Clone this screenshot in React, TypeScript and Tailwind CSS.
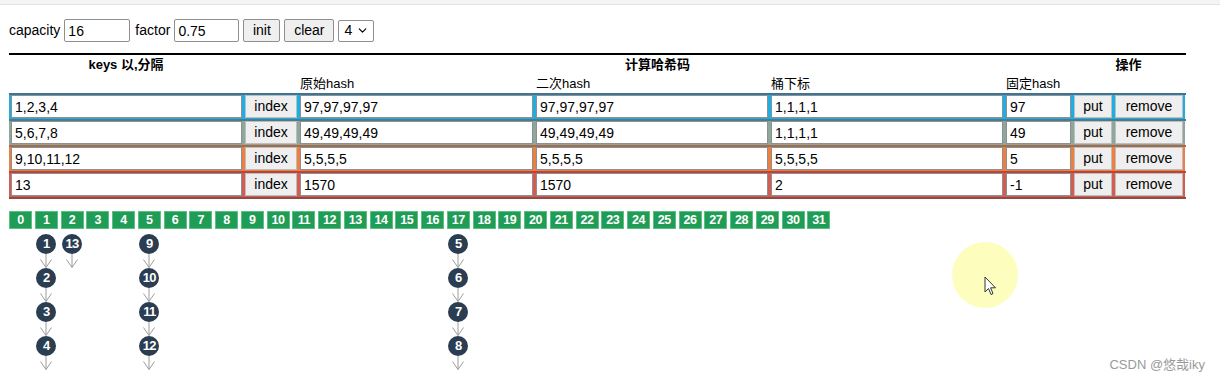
import { ChevronDown } from 'lucide-react';

type Row = {
  keys: string;
  h1: string;
  h2: string;
  idx: string;
  fixed: string;
  cell: string;
  edge: string;
};

const rows: Row[] = [
  { keys: '1,2,3,4', h1: '97,97,97,97', h2: '97,97,97,97', idx: '1,1,1,1', fixed: '97', cell: 'bg-[#1aafe6]', edge: 'border-[#3b7697]' },
  { keys: '5,6,7,8', h1: '49,49,49,49', h2: '49,49,49,49', idx: '1,1,1,1', fixed: '49', cell: 'bg-[#8ca89a]', edge: 'border-[#52798a]' },
  { keys: '9,10,11,12', h1: '5,5,5,5', h2: '5,5,5,5', idx: '5,5,5,5', fixed: '5', cell: 'bg-[#ef7f3f]', edge: 'border-[#a8694d]' },
  { keys: '13', h1: '1570', h2: '1570', idx: '2', fixed: '-1', cell: 'bg-[#d65b51]', edge: 'border-[#b4483f]' },
];

// bucket index -> chain of keys
const chains: Record<number, number[]> = {
  1: [1, 2, 3, 4],
  2: [13],
  5: [9, 10, 11, 12],
  17: [5, 6, 7, 8],
};

const font = "font-['Liberation_Sans','Noto_Sans_CJK_SC',sans-serif]";

const Arrow = () => (
  <svg width="16" height="14" viewBox="0 0 16 14" className="block">
    <line x1="8" y1="0" x2="8" y2="13.5" stroke="#9c9c9c" strokeWidth="1" />
    <polyline points="2.5,5.5 8,13.5 13.5,5.5" fill="none" stroke="#9c9c9c" strokeWidth="1" />
  </svg>
);

const Node = ({ n }: { n: number }) => (
  <div className="w-[20px] h-[20px] rounded-full bg-[#2a3d51] text-white text-[13px] font-bold flex items-center justify-center tracking-[-0.8px]">
    {n}
  </div>
);

const Bucket = ({ i }: { i: number }) => (
  <div className="flex flex-col items-center w-[23px]">
    <div className="w-[23px] h-[18px] bg-[#1f9c55] border border-[#5cbf84] text-white text-[12.5px] font-bold flex items-center justify-center tracking-[-0.5px]">
      {i}
    </div>
    {chains[i] && (
      <div className="flex flex-col items-center mt-[5px]">
        {chains[i].map((n) => (
          <div key={n} className="flex flex-col items-center">
            <Node n={n} />
            <Arrow />
          </div>
        ))}
      </div>
    )}
  </div>
);

const inputCls = 'block w-full h-[23px] bg-white border border-[#8f8f8f] px-[3px] text-[14px] text-black outline-none';
const btnCls = 'w-full h-[23px] bg-[#efefef] border border-[#bdbdbd] text-[14px] text-black flex items-center justify-center';
const cols = 'grid grid-cols-[234px_55px_236px_235px_235px_68px_41px_72px]';
const cellCls = 'flex pl-[2px] pr-[1px] pb-[1px]';

export default function App() {
  return (
    <div className={`relative w-[1220px] h-[383px] overflow-hidden bg-white text-black ${font}`}>
      <div className="h-[5px] bg-[#f4f4f4] border-b border-[#e2e2e2]" />

      {/* controls */}
      <div className="flex items-center gap-[4px] ml-[9px] mt-[14px] text-[14px]">
        <span>capacity</span>
        <input className="w-[66px] h-[23px] border border-[#8f8f8f] rounded-[2px] px-[3px] text-[14px]" defaultValue="16" />
        <span className="ml-[1px]">factor</span>
        <input className="w-[65px] h-[23px] border border-[#8f8f8f] rounded-[2px] px-[3px] text-[14px]" defaultValue="0.75" />
        <button className="w-[37px] h-[23px] bg-[#efefef] border border-[#8f8f8f] rounded-[2px] text-[14px]">init</button>
        <button className="w-[50px] h-[23px] bg-[#efefef] border border-[#8f8f8f] rounded-[2px] text-[14px]">clear</button>
        <div className="w-[36px] h-[22px] border border-[#8f8f8f] rounded-[2px] flex items-center justify-between pl-[5px] pr-[4px]">
          <span>4</span>
          <ChevronDown className="w-[13px] h-[13px]" strokeWidth={2.2} />
        </div>
      </div>

      {/* table */}
      <div className="ml-[9px] mt-[11px] w-[1177px] border-t-2 border-black">
        <div className={`${cols} text-[13px] h-[19px] items-center font-bold`}>
          <div className="text-center">keys 以,分隔</div>
          <div className="col-span-5 text-center">计算哈希码</div>
          <div className="col-span-2 text-center">操作</div>
        </div>
        <div className={`${cols} text-[13px] h-[19px] items-center`}>
          <div />
          <div />
          <div className="pl-[2px]">原始hash</div>
          <div className="pl-[2px]">二次hash</div>
          <div className="pl-[2px]">桶下标</div>
          <div className="pl-[2px]">固定hash</div>
          <div />
          <div />
        </div>
        {rows.map((r, i) => (
          <div
            key={r.keys}
            className={`${cols} border-t-2 ${r.edge} ${i === rows.length - 1 ? 'border-b-2 border-b-[#8e4d44]' : ''}`}
          >
            <div className={`${r.cell} ${cellCls}`}>
              <input className={inputCls} defaultValue={r.keys} />
            </div>
            <div className={`${r.cell} ${cellCls}`}>
              <button className={btnCls}>index</button>
            </div>
            <div className={`${r.cell} ${cellCls}`}>
              <input className={inputCls} defaultValue={r.h1} />
            </div>
            <div className={`${r.cell} ${cellCls}`}>
              <input className={inputCls} defaultValue={r.h2} />
            </div>
            <div className={`${r.cell} ${cellCls}`}>
              <input className={inputCls} defaultValue={r.idx} />
            </div>
            <div className={`${r.cell} ${cellCls}`}>
              <input className={inputCls} defaultValue={r.fixed} />
            </div>
            <div className={`${r.cell} ${cellCls}`}>
              <button className={btnCls}>put</button>
            </div>
            <div className={`${r.cell} flex pl-[2px] pr-[2px] pb-[1px]`}>
              <button className={btnCls}>remove</button>
            </div>
          </div>
        ))}
      </div>

      {/* buckets */}
      <div className="flex items-start gap-[2.75px] ml-[9px] mt-[12px]">
        {Array.from({ length: 32 }, (_, i) => (
          <Bucket key={i} i={i} />
        ))}
      </div>

      {/* cursor highlight */}
      <div className="absolute left-[952px] top-[242px] w-[66px] h-[66px] rounded-full bg-[#fdfdb6] opacity-90" />
      <svg className="absolute left-[984px] top-[276px]" width="14" height="21" viewBox="0 0 14 21">
        <path d="M1 1 L1 16 L4.5 12.5 L7 18.5 L9 17.6 L6.6 11.8 L11.5 11.8 Z" fill="white" stroke="#333" strokeWidth="1" strokeLinejoin="round" />
      </svg>

      <div className="absolute right-[15px] bottom-[9px] text-[13px] text-[#9a9a9a]">CSDN @悠哉iky</div>
    </div>
  );
}
